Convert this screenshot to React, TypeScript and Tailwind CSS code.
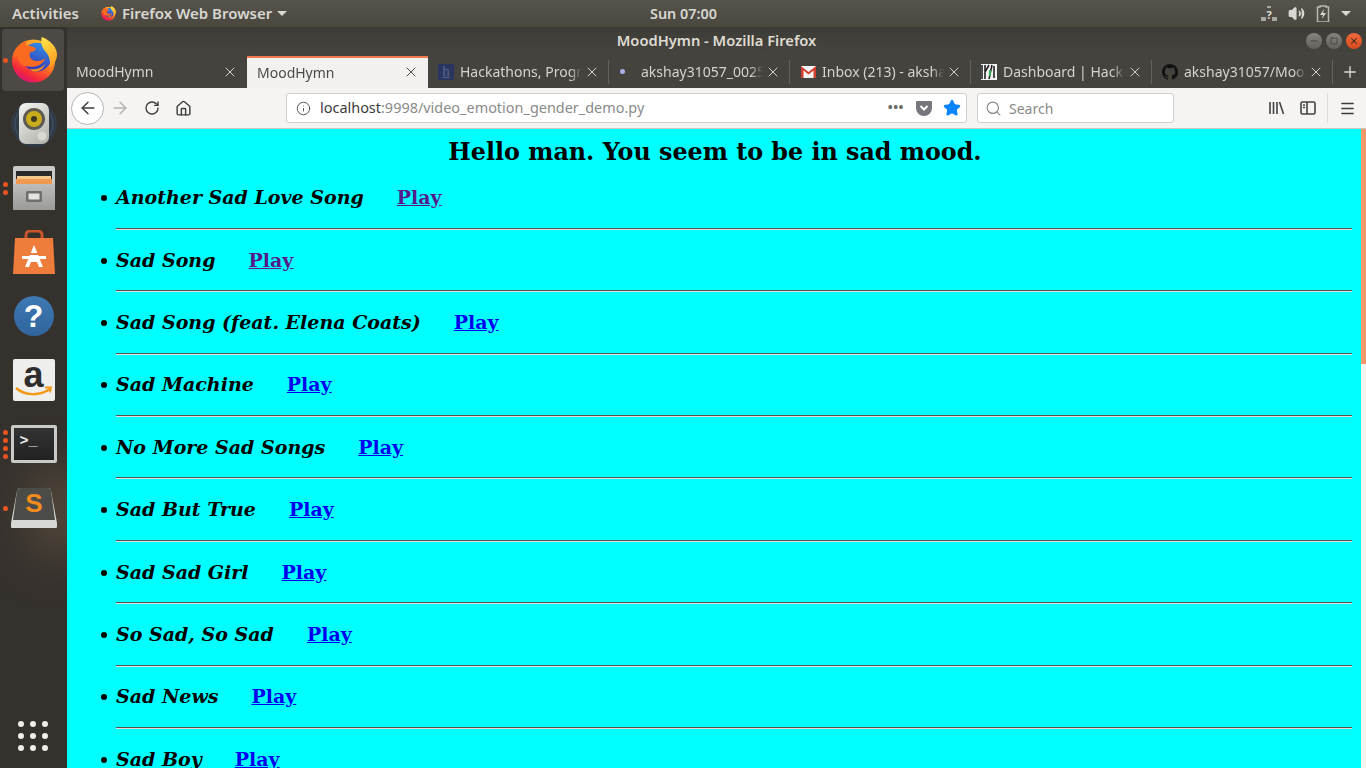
import { X, Plus, RotateCw, Home, ArrowLeft, ArrowRight, Search, Volume2, Menu, Star, Minus, Square, Info } from "lucide-react";

const songs = [
  "Another Sad Love Song",
  "Sad Song",
  "Sad Song (feat. Elena Coats)",
  "Sad Machine",
  "No More Sad Songs",
  "Sad But True",
  "Sad Sad Girl",
  "So Sad, So Sad",
  "Sad News",
  "Sad Boy",
];

function FirefoxLogo({ size }: { size: number }) {
  return (
    <svg width={size} height={size} viewBox="0 0 48 48">
      <defs>
        <linearGradient id="ffOuter" x1="0.8" y1="0.1" x2="0.3" y2="1">
          <stop offset="0" stopColor="#ffb52b" />
          <stop offset="0.45" stopColor="#ff7a1f" />
          <stop offset="0.8" stopColor="#f4283a" />
          <stop offset="1" stopColor="#d6127c" />
        </linearGradient>
        <linearGradient id="ffTail" x1="0.3" y1="0" x2="0.7" y2="1">
          <stop offset="0" stopColor="#ffe14a" />
          <stop offset="1" stopColor="#ff9a1f" />
        </linearGradient>
        <linearGradient id="ffGlobe" x1="0.7" y1="0" x2="0.3" y2="1">
          <stop offset="0" stopColor="#2f8fe8" />
          <stop offset="1" stopColor="#3b2fb0" />
        </linearGradient>
      </defs>
      <circle cx="23.500" cy="25" r="22.500" fill="url(#ffOuter)" />
      <circle cx="27" cy="21" r="15" fill="url(#ffGlobe)" />
      <path d="M32 0c-1 6 0 11 4 15 4 5 6 10 4 17 5-3 8-8 8-14C48 11 41 3 32 0z" fill="url(#ffTail)" />
      <path d="M2 20C4 12 9 6 17 4c-2 2-2 4-1 5 3 0 7 0 10 3-1 3-3 3-6 4-1 2-1 5 1 7 4 3 11 3 15-1-2 6-9 10-15 9C12 31 7 27 7 19 5 20 3 22 2 20z" fill="#fa6a1f" />
      <path d="M19 33c6 2 13 0 17-5-3 7-10 11-17 5z" fill="#f9941f" />
    </svg>
  );
}

function DockItem({ dots = 0, active = false, children }: { dots?: number; active?: boolean; children: React.ReactNode }) {
  return (
    <div className="relative flex h-[64px] w-[67px] shrink-0 items-center justify-center">
      {active && <div className="absolute left-[2px] top-[1px] h-[62px] w-[62px] rounded-[4px] bg-[#4d4a45]" />}
      <div className="absolute left-[2px] top-0 flex h-full w-[6px] flex-col items-center justify-center gap-[3px]">
        {Array.from({ length: dots }).map((_, i) => (
          <span key={i} className="h-[5px] w-[5px] rounded-full bg-[#e95420]" />
        ))}
      </div>
      <div className="relative">{children}</div>
    </div>
  );
}

function Dock() {
  return (
    <aside className="relative flex h-full w-[67px] shrink-0 flex-col overflow-hidden bg-[#35312d] pt-[1px]">
      <div className="absolute left-[30px] top-[440px] h-[90px] w-[60px] rounded-full bg-[#6b5a45]/60 blur-xl" />
      <DockItem dots={1} active>
        <FirefoxLogo size={46} />
      </DockItem>
      <DockItem>
        <svg width="48" height="46" viewBox="0 0 48 46">
          <defs>
            <linearGradient id="spk" x1="0" y1="0" x2="0.600" y2="1">
              <stop offset="0" stopColor="#f4f4f0" />
              <stop offset="1" stopColor="#b9b9b3" />
            </linearGradient>
          </defs>
          <circle cx="24" cy="23" r="23" fill="#2f4258" opacity="0.6" />
          <circle cx="24" cy="23" r="19" fill="none" stroke="#46566a" strokeWidth="1" />
          <rect x="9" y="2" width="30" height="41" rx="7" fill="url(#spk)" />
          <circle cx="24" cy="18" r="11" fill="#5c5a53" />
          <circle cx="24" cy="18" r="8" fill="#c9ac1b" />
          <circle cx="24" cy="18" r="3" fill="#3d3a20" />
          <circle cx="32" cy="35" r="4.500" fill="#d9d9d3" />
        </svg>
      </DockItem>
      <DockItem dots={2}>
        <svg width="42" height="44" viewBox="0 0 42 44">
          <defs>
            <linearGradient id="cab" x1="0" y1="0" x2="0" y2="1">
              <stop offset="0" stopColor="#bdbdbb" />
              <stop offset="1" stopColor="#9a9a98" />
            </linearGradient>
          </defs>
          <rect x="0" y="0" width="42" height="44" rx="2" fill="#c9c9c7" />
          <rect x="3" y="5" width="36" height="14" fill="#2a2a2a" />
          <rect x="4" y="10" width="34" height="3" fill="#f5c78c" />
          <rect x="3" y="13" width="36" height="6" fill="#ef9a4e" />
          <rect x="0" y="18" width="42" height="26" fill="url(#cab)" />
          <rect x="13" y="25" width="16" height="11" rx="1.500" fill="#6f6f6d" />
          <rect x="15.500" y="27.500" width="11" height="6" fill="#e4e4e2" />
        </svg>
      </DockItem>
      <DockItem>
        <svg width="42" height="44" viewBox="0 0 42 44">
          <path d="M13 10V5a4 4 0 0 1 4-4h8a4 4 0 0 1 4 4v5" fill="none" stroke="#c9562a" strokeWidth="3" />
          <path d="M2 8h38l2 36H0z" fill="#ee7c3b" />
          <path d="M21 15l-9 22h4l2-5h6l2 5h4z" fill="#fff" />
          <rect x="9" y="26" width="24" height="3" fill="#fff" />
          <rect x="14" y="23" width="14" height="2" fill="#ee7c3b" />
        </svg>
      </DockItem>
      <DockItem>
        <div className="flex h-[40px] w-[40px] items-center justify-center rounded-full bg-gradient-to-b from-[#3f7ab4] to-[#30649c] font-['Liberation_Sans',sans-serif] text-[32px] leading-none font-bold text-white">?</div>
      </DockItem>
      <DockItem>
        <div className="relative flex h-[42px] w-[42px] justify-center rounded-[2px] bg-[#eeeeec] font-['Liberation_Sans',sans-serif] text-[36px] leading-[32px] font-bold text-[#2d2d2d]">
          a
          <svg width="38" height="12" viewBox="0 0 38 12" className="absolute bottom-[3px] left-[2px]">
            <path d="M1 2c9 8 24 8 34 1" fill="none" stroke="#f39a18" strokeWidth="2.500" />
            <path d="M30 1.500l6 0-1 5" fill="none" stroke="#f39a18" strokeWidth="1.800" />
          </svg>
        </div>
      </DockItem>
      <DockItem dots={4}>
        <div className="flex h-[38px] w-[46px] items-start rounded-[2px] border-[3px] border-[#c9c9c5] bg-gradient-to-b from-[#333] to-[#222] pt-[6px] pl-[6px] font-['Liberation_Mono',monospace] text-[15px] leading-[15px] font-bold text-[#eee]">
          {">_"}
        </div>
      </DockItem>
      <DockItem dots={1}>
        <svg width="46" height="40" viewBox="0 0 46 40">
          <path d="M10 0h26a4 4 0 0 1 4 3l6 32a3 3 0 0 1-3 5H3a3 3 0 0 1-3-5L6 3a4 4 0 0 1 4-3z" fill="#d8d8d4" />
          <path d="M10 0h26a4 4 0 0 1 4 3l4 29H2L6 3a4 4 0 0 1 4-3z" fill="#4b4b48" />
          <text x="23" y="24" textAnchor="middle" fontFamily="Liberation Sans, sans-serif" fontWeight="700" fontSize="26" fill="#f28c1e">S</text>
        </svg>
      </DockItem>
      <div className="mt-auto mb-[17px] ml-[18px] grid w-[30px] grid-cols-3 gap-[6px]">
        {Array.from({ length: 9 }).map((_, i) => (
          <span key={i} className="h-[6px] w-[6px] rounded-full bg-[#eeeeea]" />
        ))}
      </div>
    </aside>
  );
}

function TopPanel() {
  return (
    <header className="relative flex h-[27px] shrink-0 items-center bg-gradient-to-b from-[#56534c] to-[#4a473f] pr-[12px] pl-[12px] font-['Noto_Sans',sans-serif] text-[15px] font-semibold text-[#d8d7d2]">
      <span>Activities</span>
      <span className="ml-[22px]"><FirefoxLogo size={15} /></span>
      <span className="ml-[6px]">Firefox Web Browser</span>
      <span className="ml-[5px] h-0 w-0 border-x-[5px] border-t-[5px] border-x-transparent border-t-[#d8d7d2]" />
      <span className="absolute left-[650px] text-[14.400px]">Sun 07:00</span>
      <div className="ml-auto flex items-center gap-[11px] pr-[3px]">
        <svg width="16" height="16" viewBox="0 0 16 16" fill="#a9a8a3">
          <rect x="0" y="11" width="5" height="4" />
          <rect x="11" y="11" width="5" height="4" />
          <rect x="6" y="0" width="4" height="2" />
          <text x="8" y="13" textAnchor="middle" fontFamily="Noto Sans, sans-serif" fontWeight="700" fontSize="11" fill="#e0dfda">?</text>
        </svg>
        <Volume2 size={17} strokeWidth={2.200} className="fill-[#d8d7d2]" />
        <svg width="14" height="17" viewBox="0 0 14 17">
          <path d="M4 2V1h6v1h2.500v15h-11V2z" fill="none" stroke="#b8b7b2" strokeWidth="1.500" />
          <path d="M8 4L4 10h3l-1 4 4-6H7z" fill="#d8d7d2" />
        </svg>
        <span className="h-0 w-0 border-x-[5px] border-t-[5px] border-x-transparent border-t-[#d8d7d2]" />
      </div>
    </header>
  );
}

function TitleBar() {
  return (
    <div className="relative flex h-[28px] items-center justify-center bg-gradient-to-b from-[#3e3c37] to-[#46443e] pb-[2px] font-['Noto_Sans',sans-serif] text-[14.700px] font-semibold text-[#dfdbd2]">
      MoodHymn - Mozilla Firefox
      <div className="absolute top-[6px] right-[4px] flex gap-[4px]">
        <span className="flex h-[16px] w-[16px] items-center justify-center rounded-full bg-gradient-to-b from-[#86847e] to-[#62605a] text-[#3c3b37]"><Minus size={10} strokeWidth={2} /></span>
        <span className="flex h-[16px] w-[16px] items-center justify-center rounded-full bg-gradient-to-b from-[#86847e] to-[#62605a] text-[#3c3b37]"><Square size={8} strokeWidth={2} /></span>
        <span className="flex h-[16px] w-[16px] items-center justify-center rounded-full bg-gradient-to-b from-[#ef6a3a] to-[#d84a1e] text-[#3c2a20]"><X size={10} strokeWidth={2.500} /></span>
      </div>
    </div>
  );
}

function Tab({ title, icon, active = false, sep = false, first = false }: { title: string; icon?: React.ReactNode; active?: boolean; sep?: boolean; first?: boolean }) {
  return (
    <div
      className={
        active
          ? "relative flex h-[32px] w-[181px] shrink-0 items-center border-t-2 border-[#ef7b4c] bg-[#f2f1f0] pr-[9px] pb-[2px] pl-[10px] text-[#4a4a48]"
          : first
            ? "relative flex h-[33px] w-[180px] shrink-0 items-center pr-[9px] pl-[9px] text-[#d5d3cd]"
            : "relative flex h-[33px] w-[181px] shrink-0 items-center pr-[9px] pl-[10px] text-[#d5d3cd]"
      }
    >
      {icon && <span className="mr-[6px] flex w-[16px] shrink-0 items-center justify-center">{icon}</span>}
      <span className="min-w-0 flex-1 overflow-hidden whitespace-nowrap [mask-image:linear-gradient(to_right,black_90%,transparent)]">{title}</span>
      <X size={16} strokeWidth={1.500} className="ml-[2px] shrink-0" />
      {sep && <span className="absolute top-[5px] right-0 h-[24px] w-px bg-[#65635d]" />}
    </div>
  );
}

function TabStrip() {
  return (
    <div className="flex h-[33px] items-end bg-[#45433d] font-['Noto_Sans',sans-serif] text-[14px]">
      <Tab title="MoodHymn" first />
      <Tab title="MoodHymn" active />
      <Tab title="Hackathons, Programming" sep icon={<span className="flex h-[16px] w-[16px] items-center justify-center bg-[#2a3560] font-['Liberation_Serif',serif] text-[15px] leading-none text-[#5c668c] underline">h</span>} />
      <Tab title="akshay31057_0025" sep icon={<span className="mr-[9px] h-[5px] w-[5px] rounded-full bg-[#a9b2e8]" />} />
      <Tab
        title="Inbox (213) - akshay"
        sep
        icon={
          <svg width="15" height="12" viewBox="0 0 15 12">
            <rect width="15" height="12" fill="#f4f4f4" />
            <path d="M0 0l7.500 6L15 0v12h-2.500V4.500L7.500 8.500 2.500 4.500V12H0z" fill="#d23f31" />
          </svg>
        }
      />
      <Tab
        title="Dashboard | HackerEarth"
        sep
        icon={
          <svg width="16" height="16" viewBox="0 0 16 16">
            <rect width="16" height="16" fill="#f4f4f4" />
            <path d="M1 1v14M4 1v14M4 8L8 1M8 15l3-14M13 2v12" stroke="#222" strokeWidth="1.600" />
            <path d="M9 6v6" stroke="#2faa4f" strokeWidth="2" />
          </svg>
        }
      />
      <Tab
        title="akshay31057/MoodHymn"
        sep
        icon={
          <svg width="16" height="16" viewBox="0 0 16 16" fill="#111">
            <path d="M8 0C3.580 0 0 3.580 0 8c0 3.540 2.290 6.530 5.470 7.590.4.070.55-.17.55-.38v-1.340c-2.230.48-2.700-1.070-2.700-1.070-.36-.93-.89-1.170-.89-1.170-.73-.5.050-.49.050-.49.8.060 1.230.83 1.230.83.71 1.220 1.870.87 2.330.66.070-.52.28-.87.51-1.070-1.780-.2-3.640-.89-3.640-3.950 0-.87.31-1.590.82-2.150-.08-.2-.36-1.020.08-2.120 0 0 .67-.21 2.200.82a7.600 7.600 0 0 1 4 0c1.530-1.040 2.200-.82 2.200-.82.44 1.100.16 1.920.08 2.120.51.56.82 1.270.82 2.150 0 3.070-1.870 3.750-3.650 3.950.29.25.54.73.54 1.480v2.200c0 .21.15.46.55.38A8 8 0 0 0 16 8c0-4.420-3.580-8-8-8z" />
          </svg>
        }
      />
      <Plus size={18} strokeWidth={1.800} className="mb-[7px] ml-[8px] text-[#dcdad4]" />
    </div>
  );
}

function Toolbar() {
  return (
    <div className="flex h-[41px] items-center border-b border-[#c9c8c5] bg-[#f5f4f3] font-['Noto_Sans',sans-serif] text-[14px] text-[#3c3c3c]">
      <span className="ml-[4px] flex h-[33px] w-[33px] items-center justify-center rounded-full border border-[#b5b4b1] bg-white"><ArrowLeft size={20} strokeWidth={1.700} /></span>
      <ArrowRight size={20} strokeWidth={1.700} className="ml-[6px] text-[#b3b2af]" />
      <RotateCw size={16} strokeWidth={2} className="ml-[14px]" />
      <Home size={17} strokeWidth={2} className="ml-[15px]" />
      <div className="ml-[94px] flex h-[30px] w-[681px] items-center rounded-[3px] border border-[#cfcecb] bg-white pr-[5px] pl-[9px]">
        <Info size={15} strokeWidth={1.600} className="text-[#5a5a58]" />
        <span className="ml-[9px] text-[14.440px]">localhost<span className="text-[#8a8a88]">:9998/video_emotion_gender_demo.py</span></span>
        <span className="ml-auto text-[13px] font-bold tracking-[0.5px] text-[#6a6a68]">•••</span>
        <svg width="16" height="15" viewBox="0 0 16 15" className="ml-[12px]">
          <path d="M1 0h14a1 1 0 0 1 1 1v6a8 8 0 0 1-16 0V1a1 1 0 0 1 1-1z" fill="#77767a" />
          <path d="M4.500 5L8 8.500 11.500 5" fill="none" stroke="#fff" strokeWidth="2" />
        </svg>
        <Star size={18} className="ml-[11px] fill-[#0a84ff] text-[#0a84ff]" />
      </div>
      <div className="ml-[10px] flex h-[30px] w-[197px] items-center rounded-[3px] border border-[#cfcecb] bg-white pl-[7px] text-[#8a8a88]">
        <Search size={17} strokeWidth={1.700} />
        <span className="ml-[7px]">Search</span>
      </div>
      <svg width="16" height="14" viewBox="0 0 16 14" className="ml-[95px]" stroke="#444" strokeWidth="1.600" fill="none">
        <path d="M1 1v12M4.500 1v12M8 1v12M10.500 1l4 12" />
      </svg>
      <svg width="16" height="14" viewBox="0 0 16 14" className="ml-[15px]" stroke="#444" strokeWidth="1.600" fill="none">
        <rect x="1" y="1" width="14" height="12" rx="1.500" />
        <path d="M7 1v12M3 4h2M3 6.500h2" />
      </svg>
      <span className="ml-[11px] h-[30px] w-px bg-[#dddcd9]" />
      <Menu size={17} strokeWidth={2} className="ml-[11px]" />
    </div>
  );
}

function SongPage() {
  return (
    <main className="relative min-h-0 flex-1 overflow-hidden bg-[#00ffff] pr-[3px] font-['DejaVu_Serif',serif] text-black">
      <h1 className="pt-[7px] text-center text-[23.800px] leading-[32px] font-bold">Hello man. You seem to be in sad mood.</h1>
      <ul className="mt-[4.300px] list-none pr-[11px] pl-[49px] text-[19px] font-bold">
        {songs.map((song, i) => (
          <li key={song} className="relative h-[62.400px] pt-[10px] leading-[31px]">
            <span className="absolute top-[23px] left-[-15px] h-[6px] w-[6px] rounded-full bg-black" />
            <i>{song}</i>
            <a className={i < 2 ? "ml-[33px] text-[#551a8b] underline" : "ml-[33px] text-[#0000ee] underline"} href="#">Play</a>
            <div className="mt-[14.500px] h-[2px] border-t border-b border-t-[#555] border-b-[#ddd]" />
          </li>
        ))}
      </ul>
      <div className="absolute top-0 right-0 h-full w-[5px] bg-[#f4f4f2]">
        <div className="h-[235px] bg-[#f29a6c]" />
      </div>
    </main>
  );
}

export default function App() {
  return (
    <div className="flex h-[768px] w-[1366px] flex-col overflow-hidden">
      <TopPanel />
      <div className="flex min-h-0 flex-1">
        <Dock />
        <div className="flex min-w-0 flex-1 flex-col">
          <TitleBar />
          <TabStrip />
          <Toolbar />
          <SongPage />
        </div>
      </div>
    </div>
  );
}
